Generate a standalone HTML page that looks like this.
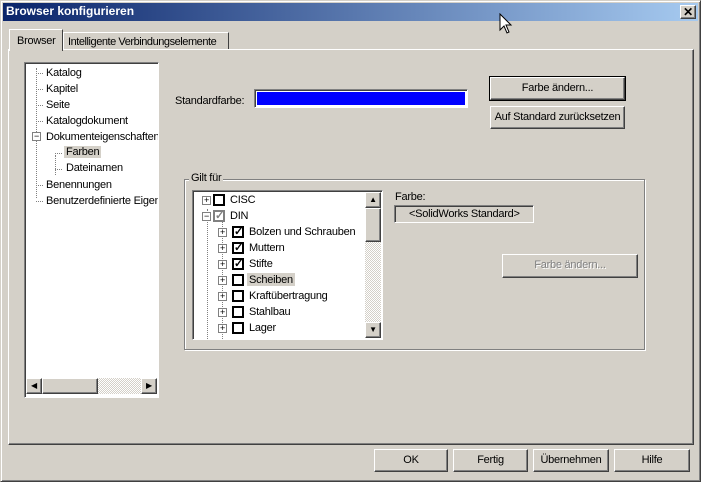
<!DOCTYPE html>
<html><head><meta charset="utf-8"><style>
*{box-sizing:border-box;margin:0;padding:0}
body{width:701px;height:482px;background:#d4d0c8;font-family:"Liberation Sans",sans-serif;font-size:11px;letter-spacing:-0.25px;color:#000;position:relative;overflow:hidden}
.a{position:absolute;white-space:nowrap}
.raised{border:1px solid;border-color:#fff #404040 #404040 #fff;box-shadow:inset -1px -1px 0 #808080}
.sunk{border:1px solid;border-color:#808080 #fff #fff #808080;box-shadow:inset 1px 1px 0 #404040}
.btn{position:absolute;background:#d4d0c8;text-align:center;line-height:20px}
.cb{position:absolute;width:12px;height:12px;border:2px solid #000;background:#fff;font-size:11px;line-height:8px;text-align:center;font-weight:bold}
.ex{position:absolute;width:9px;height:9px;border:1px solid #808080;background:#fff;font-size:9px;line-height:7px;text-align:center}
.dot{position:absolute;border-top:1px dotted #808080;width:7px}
.vd{position:absolute;border-left:1px dotted #808080}
</style></head><body>
<div class="a" style="left:0;top:0;width:701px;height:482px;border:1px solid;border-color:#d4d0c8 #404040 #404040 #d4d0c8;box-shadow:inset 1px 1px 0 #fff,inset -1px -1px 0 #808080"></div>
<div class="a" style="left:3px;top:3px;width:695px;height:18px;background:linear-gradient(to right,#0a246a,#a6caf0);color:#fff;font-weight:bold;font-size:12px;line-height:17px;padding-left:3px;letter-spacing:0">Browser konfigurieren</div>
<div class="btn raised" style="left:680px;top:5px;width:16px;height:14px;line-height:12px;font-size:12px;font-weight:bold">✕</div>
<div class="a raised" style="left:8px;top:49px;width:686px;height:396px"></div>
<div class="a" style="left:9px;top:29px;width:54px;height:22px;background:#d4d0c8;border:1px solid;border-color:#fff #404040 transparent #fff;border-bottom:none;padding:5px 0 0 7px">Browser</div>
<div class="a" style="left:63px;top:32px;width:166px;height:17px;border:1px solid;border-color:#fff #404040 transparent #fff;border-bottom:none;padding:3px 0 0 4px;letter-spacing:-0.45px">Intelligente Verbindungselemente</div>
<div class="a sunk" style="left:24px;top:62px;width:135px;height:336px;background:#fff;overflow:hidden">
<div class="vd" style="left:11px;top:5px;height:130px"></div>
<div class="vd" style="left:30px;top:92px;height:20px"></div>
<div class="dot" style="left:11px;top:10px"></div><div class="a" style="left:21px;top:4px">Katalog</div>
<div class="dot" style="left:11px;top:26px"></div><div class="a" style="left:21px;top:20px">Kapitel</div>
<div class="dot" style="left:11px;top:42px"></div><div class="a" style="left:21px;top:36px">Seite</div>
<div class="dot" style="left:11px;top:58px"></div><div class="a" style="left:21px;top:52px">Katalogdokument</div>
<div class="ex" style="left:7px;top:69px">−</div><div class="a" style="left:21px;top:68px">Dokumenteigenschaften</div>
<div class="dot" style="left:30px;top:90px"></div><div class="a" style="left:39px;top:83px;background:#d4d0c8;padding:0 2px">Farben</div>
<div class="dot" style="left:30px;top:106px"></div><div class="a" style="left:41px;top:99px">Dateinamen</div>
<div class="dot" style="left:11px;top:122px"></div><div class="a" style="left:21px;top:116px">Benennungen</div>
<div class="dot" style="left:11px;top:138px"></div><div class="a" style="left:21px;top:132px">Benutzerdefinierte Eigenschaften</div>
<div class="a" style="left:1px;top:315px;width:131px;height:16px;background:repeating-conic-gradient(#d4d0c8 0 25%,#fff 0 50%) 0 0/2px 2px"></div>
<div class="btn raised" style="left:1px;top:315px;width:16px;height:16px;line-height:14px;font-size:8px">◀</div>
<div class="btn raised" style="left:17px;top:315px;width:56px;height:16px"></div>
<div class="btn raised" style="left:116px;top:315px;width:16px;height:16px;line-height:14px;font-size:8px">▶</div>
</div>
<div class="a" style="left:175px;top:95px">Standardfarbe:</div>
<div class="a sunk" style="left:254px;top:89px;width:214px;height:19px;background:#fff;padding:2px"><div style="background:#0000ff;width:100%;height:100%"></div></div>
<div class="btn raised" style="left:490px;top:77px;width:135px;height:23px;outline:1px solid #000;line-height:20px">Farbe ändern...</div>
<div class="btn raised" style="left:490px;top:106px;width:135px;height:23px;line-height:20px">Auf Standard zurücksetzen</div>
<div class="a" style="left:184px;top:179px;width:461px;height:171px;border:1px solid #808080;box-shadow:1px 1px 0 #fff,inset 1px 1px 0 #fff"></div>
<div class="a" style="left:189px;top:172px;background:#d4d0c8;padding:0 2px">Gilt für</div>
<div class="a sunk" style="left:192px;top:190px;width:191px;height:150px;background:#fff;overflow:hidden">
<div class="vd" style="left:14px;top:18px;height:130px"></div>
<div class="vd" style="left:29px;top:30px;height:120px"></div>
<div class="ex" style="left:9px;top:5px">+</div><div class="cb" style="left:20px;top:3px"></div><div class="a" style="left:37px;top:3px">CISC</div>
<div class="ex" style="left:9px;top:21px">−</div><div class="cb" style="left:20px;top:19px;border-color:#808080;color:#808080">✓</div><div class="a" style="left:37px;top:19px">DIN</div>
<div class="ex" style="left:25px;top:37px">+</div><div class="cb" style="left:39px;top:35px">✓</div><div class="a" style="left:56px;top:35px">Bolzen und Schrauben</div>
<div class="ex" style="left:25px;top:53px">+</div><div class="cb" style="left:39px;top:51px">✓</div><div class="a" style="left:56px;top:51px">Muttern</div>
<div class="ex" style="left:25px;top:69px">+</div><div class="cb" style="left:39px;top:67px">✓</div><div class="a" style="left:56px;top:67px">Stifte</div>
<div class="ex" style="left:25px;top:85px">+</div><div class="cb" style="left:39px;top:83px"></div><div class="a" style="left:54px;top:82px;background:#d4d0c8;padding:1px 2px 0">Scheiben</div>
<div class="ex" style="left:25px;top:101px">+</div><div class="cb" style="left:39px;top:99px"></div><div class="a" style="left:56px;top:99px">Kraftübertragung</div>
<div class="ex" style="left:25px;top:117px">+</div><div class="cb" style="left:39px;top:115px"></div><div class="a" style="left:56px;top:115px">Stahlbau</div>
<div class="ex" style="left:25px;top:133px">+</div><div class="cb" style="left:39px;top:131px"></div><div class="a" style="left:56px;top:131px">Lager</div>
<div class="a" style="left:172px;top:1px;width:16px;height:146px;background:repeating-conic-gradient(#d4d0c8 0 25%,#fff 0 50%) 0 0/2px 2px"></div>
<div class="btn raised" style="left:172px;top:1px;width:16px;height:16px;line-height:14px;font-size:8px">▲</div>
<div class="btn raised" style="left:172px;top:17px;width:16px;height:34px"></div>
<div class="btn raised" style="left:172px;top:131px;width:16px;height:16px;line-height:14px;font-size:8px">▼</div>
</div>
<div class="a" style="left:395px;top:191px">Farbe:</div>
<div class="a" style="left:394px;top:205px;width:140px;height:18px;border:1px solid;border-color:#808080 #fff #fff #808080;box-shadow:inset 1px 1px 0 #404040;padding:2px 0 0 14px">&lt;SolidWorks Standard&gt;</div>
<div class="btn raised" style="left:502px;top:254px;width:136px;height:24px;color:#808080;text-shadow:1px 1px 0 #fff">Farbe ändern...</div>
<div class="btn raised" style="left:374px;top:449px;width:74px;height:23px">OK</div>
<div class="btn raised" style="left:453px;top:449px;width:75px;height:23px">Fertig</div>
<div class="btn raised" style="left:533px;top:449px;width:76px;height:23px">Übernehmen</div>
<div class="btn raised" style="left:614px;top:449px;width:76px;height:23px">Hilfe</div>
<svg class="a" style="left:499px;top:13px" width="14" height="22" viewBox="0 0 14 22"><path d="M1 1 L1 17 L5 13 L8 20 L10 19 L7 12 L12 12 Z" fill="#fff" stroke="#000" stroke-width="1"/></svg>
</body></html>
